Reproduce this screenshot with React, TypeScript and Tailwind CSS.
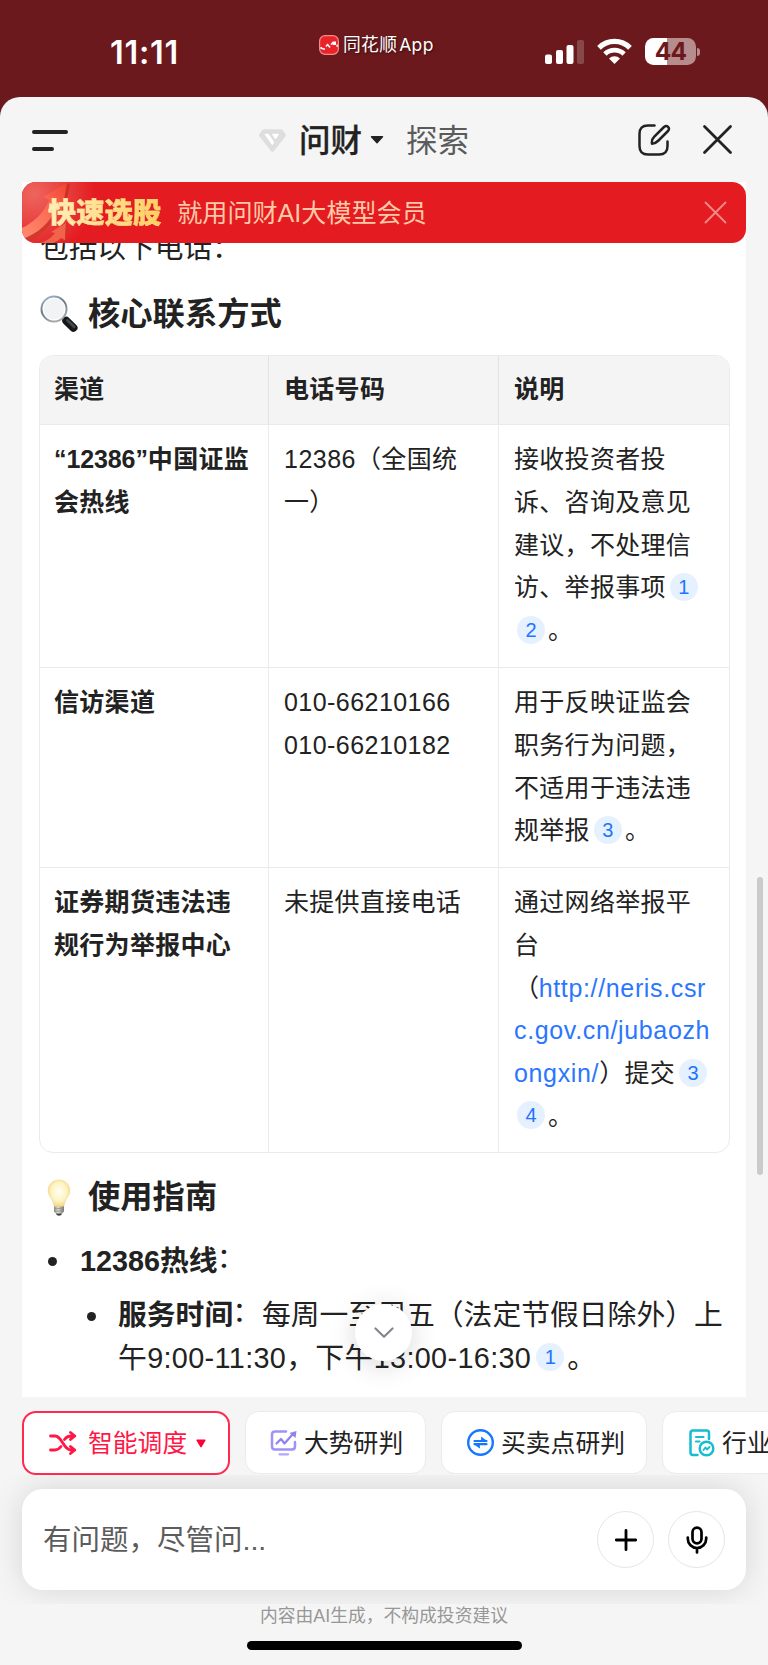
import React from "react";

function Cite({ n, className = "" }: { n: number; className?: string }) {
  return (
    <span
      className={`relative -top-[3px] mr-[3px] inline-flex h-[28px] w-[28px] items-center justify-center rounded-full bg-[#e6f1ff] align-middle text-[20px] leading-none tracking-normal text-[#1f73ff] ${className}`}
    >
      {n}
    </span>
  );
}

function Line({ children, className = "" }: { children: React.ReactNode; className?: string }) {
  return <div className={`h-[42.8px] whitespace-nowrap leading-[42.8px] ${className}`}>{children}</div>;
}

function Colon() {
  return <span className="relative -left-[1px] -top-[3px]">：</span>;
}

const cell = "pl-[14px] pt-[13px]";
const divided = "border-l border-[#ebebeb] pl-[15px] pt-[13px]";
const link = "text-[#2b76ff] tracking-[0.65px]";

function StatusBar() {
  return (
    <header className="flex h-[96.5px] shrink-0 items-start text-white">
      <div className="w-[319px] pl-[110px] pt-[33px] font-['Inter'] text-[32.5px] font-semibold leading-[40px] tracking-[0.7px]">
        11:11
      </div>
      <div className="flex w-[226px] items-center gap-[4px] pt-[33px]">
        <svg width="20" height="20" viewBox="0 0 20 20">
          <rect x="0.6" y="0.6" width="18.8" height="18.8" rx="5.5" fill="#ea2329" stroke="#f28b8e" strokeWidth="1.2" />
          <path d="M2 13.200l4 1M7 11.500l2-2.500M9 10l2 2.500M12 9.500l2-2" fill="none" stroke="#fff" strokeWidth="1.500" />
          <path d="M13.500 6.500h3.500v3.500h-3.500zM17.500 9.500h1.300v2.500h-1.300zM1.500 12h1.500v2h-1.500z" fill="#fff" />
        </svg>
        <span className="whitespace-nowrap text-[17.8px] leading-[24px] tracking-[0.3px] [text-shadow:1px_1px_2px_rgba(0,0,0,0.5)]">
          同花顺<span className="ml-[2px] font-['Inter'] text-[17.5px]">App</span>
        </span>
      </div>
      <svg className="mt-[39px]" width="39" height="26" viewBox="0 0 39 26" fill="#fff">
        <rect x="0" y="15.5" width="7" height="9.5" rx="2" />
        <rect x="11" y="11" width="7" height="14" rx="2" />
        <rect x="21.5" y="6" width="7" height="19" rx="2" />
        <rect x="32" y="1" width="7" height="24" rx="2" opacity=".2" />
      </svg>
      <svg className="ml-[13px] mt-[38px]" width="35" height="27" viewBox="0 0 35 27" fill="none" stroke="#fff">
        <path d="M2 9.8A22 22 0 0 1 33 9.8" strokeWidth="5.2" />
        <path d="M7.9 16A13.6 13.6 0 0 1 27.1 16" strokeWidth="4.7" />
        <path d="M12 20.4a8 8 0 0 1 11 0L17.5 26z" fill="#fff" stroke="none" />
      </svg>
      <div className="ml-[13px] mt-[38px] flex items-center gap-[1px]">
        <div className="flex h-[27px] w-[51px] items-center justify-center rounded-[8.5px] bg-[linear-gradient(90deg,#fff_22px,#b68c8d_22px)] font-['Inter'] text-[24.500px] font-bold leading-none tracking-[-0.8px] text-[#6b191c]">
          44
        </div>
        <div className="h-[8px] w-[3px] rounded-r-full bg-[#b68c8d]" />
      </div>
    </header>
  );
}

function NavBar() {
  return (
    <nav className="flex h-[85.5px] shrink-0 items-center pt-[1px]">
      <div className="flex w-[258px] flex-col gap-[12.5px] pl-[32px] pt-[1px]">
        <div className="h-[4px] w-[36px] rounded-full bg-[#222]" />
        <div className="h-[4px] w-[22px] rounded-full bg-[#222]" />
      </div>
      <svg className="mt-[1px]" width="29" height="25" viewBox="0 0 29 25">
        <path d="M6 1.2h17a2 2 0 0 1 1.6.8l3 4.2a2 2 0 0 1-.2 2.4L16 23a2 2 0 0 1-3 0L1.4 8.600a2 2 0 0 1-.2-2.400l3.200-4.200A2 2 0 0 1 6 1.200z" fill="#dedede" />
        <path d="M7 6.300h3.400l5.400 7.900-1.500 2.500z" fill="#fff" stroke="#fff" strokeWidth="1" strokeLinejoin="round" />
        <path d="M14.400 6.300h6.200l-3.100 4.600z" fill="#fff" stroke="#fff" strokeWidth="1" strokeLinejoin="round" />
      </svg>
      <span className="ml-[12px] pt-[2px] text-[31.5px] font-medium leading-[40px] text-[#222] [-webkit-text-stroke:0.3px_#222]">问财</span>
      <svg className="ml-[8px]" width="14" height="8" viewBox="0 0 14 8">
        <path d="M1.500.8h11L7 6.700z" fill="#222" stroke="#222" strokeWidth="1.400" strokeLinejoin="round" />
      </svg>
      <span className="ml-[22px] pt-[2px] text-[31.5px] leading-[40px] text-[#5b5b5b]">探索</span>
      <svg className="ml-[168px]" width="34" height="34" viewBox="0 0 34 34" fill="none" stroke="#222" strokeWidth="2.500" strokeLinecap="round">
        <path d="M17.500 2.500H11C5 2.500 2.500 5 2.500 11v12c0 6 2.500 8.500 8.500 8.500h11c6 0 8.500-2.500 8.500-8.500v-4.500" />
        <path d="M15 20.800c-.6-3.300 0-4.800 2.300-7.100L27 4c3-2.600 6.500.9 4 4l-9.500 9.500c-2.300 2.300-3.600 3.200-6.500 3.300z" strokeLinejoin="round" />
      </svg>
      <svg className="ml-[31px]" width="31" height="31" viewBox="0 0 31 31" fill="none" stroke="#222" strokeWidth="2.800" strokeLinecap="round">
        <path d="M2.500 2.500l26 26M28.500 2.500l-26 26" />
      </svg>
    </nav>
  );
}

function Banner() {
  return (
    <div className="absolute left-[22px] top-0 flex h-[61px] w-[724px] items-center overflow-hidden rounded-[14px] bg-[#e41b20]">
      <svg className="absolute left-0 top-0" width="90" height="61" viewBox="0 0 90 61">
        <defs>
          <radialGradient id="glow" gradientUnits="userSpaceOnUse" cx="12" cy="12" r="62">
            <stop offset="0" stopColor="#ee655e" />
            <stop offset=".5" stopColor="#e8403f" />
            <stop offset="1" stopColor="#e41b20" />
          </radialGradient>
          <linearGradient id="arrow" x1="0" y1="1" x2="1" y2="0">
            <stop offset="0" stopColor="#ff8c70" />
            <stop offset=".6" stopColor="#fb6850" />
            <stop offset="1" stopColor="#ef4434" />
          </linearGradient>
        </defs>
        <rect width="90" height="61" fill="url(#glow)" />
        <path d="M18 61c7-2 12-6 15-10l-4-1 15-9-1 17-4-2c-2 2-5 4-8 5z" fill="#f2634c" />
        <path d="M44 41l2 1-2 18-1-2z" fill="#cf3526" />
        <path d="M45 1l3 2-6 27-3-2z" fill="#cf3024" />
        <path d="M0 57C15 52 28 42 36 25l2 2C29 45 16 56 3 60z" fill="#cf3a2c" />
        <path d="M0 46C11 41 22 31 27 18l-6-3L45 1l-5 28-5-4C27 42 15 52 0 57z" fill="url(#arrow)" />
      </svg>
      <span className="relative ml-[26px] bg-[linear-gradient(90deg,#ffeebb,#ffd05e)] bg-clip-text pt-[1px] text-[28.300px] font-black leading-[40px] text-transparent [-webkit-text-stroke:0.4px_#ffdf8f]">
        快速选股
      </span>
      <span className="ml-[16px] pt-[1px] text-[25.100px] leading-[40px] text-[#ffc9a8]">就用问财AI大模型会员</span>
      <svg className="ml-auto mr-[19px]" width="23" height="23" viewBox="0 0 23 23" stroke="#f58a8c" strokeWidth="1.800" strokeLinecap="round">
        <path d="M1.500 1.500l20 20M21.500 1.500l-20 20" />
      </svg>
    </div>
  );
}

function Magnifier() {
  return (
    <svg width="38" height="38" viewBox="0 0 38 38">
      <defs>
        <linearGradient id="handle" x1="0" y1="1" x2="1" y2="0">
          <stop offset="0" stopColor="#0d0f10" />
          <stop offset=".55" stopColor="#4a5054" />
          <stop offset="1" stopColor="#090a0a" />
        </linearGradient>
        <linearGradient id="rim" x1="0" y1="0" x2="0.500" y2="1">
          <stop offset="0" stopColor="#a9c6e2" />
          <stop offset=".5" stopColor="#6b7883" />
          <stop offset="1" stopColor="#a3a7aa" />
        </linearGradient>
      </defs>
      <path d="M22.500 22.500l4 4" stroke="#999" strokeWidth="3.500" />
      <path d="M26.300 25.800l7.200 7" stroke="#15181a" strokeWidth="8" strokeLinecap="round" />
      <path d="M27.500 25.500l6.500 6.300" stroke="url(#handle)" strokeWidth="3" strokeLinecap="round" />
      <circle cx="14" cy="14" r="12.500" fill="#f2f3f4" stroke="url(#rim)" strokeWidth="2" />
      <circle cx="14" cy="14" r="10.800" fill="none" stroke="#fff" strokeWidth="1" />
    </svg>
  );
}

function Bulb() {
  return (
    <svg width="24" height="38" viewBox="0 0 24 38">
      <defs>
        <radialGradient id="bulb" cx=".5" cy=".45" r=".58">
          <stop offset="0" stopColor="#fffef4" />
          <stop offset=".6" stopColor="#fff4c4" />
          <stop offset="1" stopColor="#f2d47a" />
        </radialGradient>
        <linearGradient id="base">
          <stop offset="0" stopColor="#8c8982" />
          <stop offset=".4" stopColor="#e0deda" />
          <stop offset="1" stopColor="#77746f" />
        </linearGradient>
      </defs>
      <path d="M7 27h10v5c0 1.500-2 3-5 3s-5-1.500-5-3z" fill="url(#base)" />
      <path d="M7 30l10-1M7 32.500l10-1" stroke="#898680" strokeWidth=".7" />
      <path d="M9 34.500h6c-.5 3-5.500 3-6 0z" fill="#45423f" />
      <path d="M12 1C5.500 1 1.200 6 1.200 11.500c0 6 4.300 7.500 5.300 13 .3 1.800.5 2.800 1.500 2.800h8c1 0 1.200-1 1.500-2.800 1-5.500 5.300-7 5.300-13C22.800 6 18.500 1 12 1z" fill="url(#bulb)" stroke="#efd58c" strokeWidth=".6" />
    </svg>
  );
}

function ContactTable() {
  return (
    <div className="ml-[17px] w-[691px] overflow-hidden rounded-[14px] border border-[#ebebeb] text-[25px] tracking-[0.3px]">
      <div className="grid h-[68px] grid-cols-[228px_230px_1fr] bg-[#f4f4f4] font-bold">
        <div className="pl-[14px] pt-[12px]"><Line>渠道</Line></div>
        <div className="border-l border-[#e2e2e2] pl-[15px] pt-[12px]"><Line>电话号码</Line></div>
        <div className="border-l border-[#e2e2e2] pl-[15px] pt-[12px]"><Line>说明</Line></div>
      </div>
      <div className="grid h-[243px] grid-cols-[228px_230px_1fr] border-t border-[#ebebeb]">
        <div className={`${cell} font-bold`}>
          <Line><span className="tracking-[-0.100px]">“12386”</span>中国证监</Line>
          <Line>会热线</Line>
        </div>
        <div className={divided}>
          <Line><span className="tracking-[0.500px]">12386</span>（全国统</Line>
          <Line>一）</Line>
        </div>
        <div className={divided}>
          <Line>接收投资者投</Line>
          <Line>诉、咨询及意见</Line>
          <Line>建议，不处理信</Line>
          <Line>访、举报事项<Cite n={1} className="ml-[4px]" /></Line>
          <Line><Cite n={2} className="ml-[3px]" />。</Line>
        </div>
      </div>
      <div className="grid h-[200px] grid-cols-[228px_230px_1fr] border-t border-[#ebebeb]">
        <div className={`${cell} font-bold`}><Line>信访渠道</Line></div>
        <div className={`${divided} tracking-[0.450px]`}>
          <Line>010-66210166</Line>
          <Line>010-66210182</Line>
        </div>
        <div className={divided}>
          <Line>用于反映证监会</Line>
          <Line>职务行为问题，</Line>
          <Line>不适用于违法违</Line>
          <Line>规举报<Cite n={3} className="ml-[4px]" />。</Line>
        </div>
      </div>
      <div className="grid h-[285px] grid-cols-[228px_230px_1fr] border-t border-[#ebebeb]">
        <div className={`${cell} font-bold`}>
          <Line>证券期货违法违</Line>
          <Line>规行为举报中心</Line>
        </div>
        <div className={divided}><Line>未提供直接电话</Line></div>
        <div className={divided}>
          <Line>通过网络举报平</Line>
          <Line>台</Line>
          <Line><span className="tracking-[-0.300px]">（</span><span className={link}>http://neris.csr</span></Line>
          <Line className={link}>c.gov.cn/jubaozh</Line>
          <Line><span className={link}>ongxin/</span>）提交<Cite n={3} className="ml-[4px]" /></Line>
          <Line><Cite n={4} className="ml-[3px]" />。</Line>
        </div>
      </div>
    </div>
  );
}

function Conversation() {
  return (
    <main className="relative h-[1215px] shrink-0">
      <div className="mx-[22px] h-full overflow-hidden bg-white text-[#222]">
        <div className="mt-[45px] h-[43px] pl-[18px] text-[28.700px] leading-[43px]">包括以下电话：</div>
        <div className="mt-[22px] flex h-[43px] items-center pl-[18px]">
          <Magnifier />
          <h2 className="ml-[10px] pt-[1px] text-[32.300px] font-bold leading-[43px]">核心联系方式</h2>
        </div>
        <div className="h-[20px]" />
        <ContactTable />
        <div className="mt-[23px] flex h-[43px] items-center pl-[25px]">
          <Bulb />
          <h2 className="ml-[17px] text-[32.300px] font-bold leading-[43px]">使用指南</h2>
        </div>
        <div className="mt-[21px] flex items-center pl-[26px] text-[28.800px]">
          <span className="h-[9px] w-[9px] rounded-full bg-[#222]" />
          <Line className="ml-[23px]"><b>12386热线</b><Colon /></Line>
        </div>
        <div className="mt-[11px] flex pl-[65px] text-[28.800px]">
          <span className="mt-[18px] h-[9px] w-[9px] rounded-full bg-[#222]" />
          <div className="ml-[22px]">
            <Line><b>服务时间</b><Colon />每周一至周五（法定节假日除外）上</Line>
            <Line><span className="tracking-[0.350px]">午9:00-11:30，下午13:00-16:30</span><Cite n={1} className="ml-[5px]" />。</Line>
          </div>
        </div>
      </div>
      <Banner />
      <button className="absolute left-[355px] top-[1122px] flex h-[57px] w-[57px] items-center justify-center rounded-full bg-white shadow-[0_4px_28px_rgba(0,0,0,0.16)]">
        <svg width="20" height="12" viewBox="0 0 20 12" fill="none" stroke="#85878f" strokeWidth="2.200" strokeLinecap="round" strokeLinejoin="round">
          <path d="M1.500 1.500L10 9.800l8.500-8.300" />
        </svg>
      </button>
      <div className="absolute left-[757px] top-[695px] h-[298px] w-[5.500px] rounded-full bg-[#cacaca]" />
    </main>
  );
}

function Chips() {
  const chip = "flex h-[63px] shrink-0 items-center rounded-[14px] border-[1.500px] border-[#ebebeb] bg-white text-[24.800px] whitespace-nowrap text-[#222]";
  return (
    <div className="flex h-[78px] shrink-0 items-start gap-[15px] overflow-hidden pl-[22px] pt-[14px]">
      <button className="flex h-[64px] w-[208px] shrink-0 items-center rounded-[14px] border-2 border-[#ff2a50] bg-white pl-[25px] text-[24.800px] text-[#ff1846]">
        <svg width="28" height="24" viewBox="0 0 28 24" fill="none" stroke="#ff1846" strokeWidth="2.800" strokeLinecap="round" strokeLinejoin="round">
          <path d="M1.500 5H6c3 0 4.500 1.700 7.500 6.500S18.500 19 22 19h3.500M1.500 19H6c2.800 0 4.300-1.300 6-3.500M15.500 8.500C17.300 6 18.800 5 22 5h3.500M21.500 1.500L25.800 5l-4.300 3.500M21.500 15.500l4.300 3.500-4.300 3.500" />
        </svg>
        <span className="ml-[11px] pt-[2px]">智能调度</span>
        <svg className="ml-[9px]" width="10" height="9" viewBox="0 0 10 9">
          <path d="M1.200 1.200h7.600L5 7.500z" fill="#ff0034" stroke="#ff0034" strokeWidth="1.600" strokeLinejoin="round" />
        </svg>
      </button>
      <button className={`${chip} w-[181px] pl-[24px]`}>
        <svg width="27" height="27" viewBox="0 0 27 27" fill="none" stroke="#9d93f7" strokeWidth="2.500" strokeLinecap="round" strokeLinejoin="round">
          <path d="M16 2.500H5C3 2.500 2 3.500 2 5.500v12c0 2 1 3 3 3h17c2 0 3-1 3-3v-4.500" />
          <path d="M6.500 14.500L11 10l3.500 4.500L22 6" stroke="#8d82f2" strokeWidth="2.200" />
          <path d="M19.500 4L26.500 2l-1 7z" fill="#8d82f2" stroke="none" />
          <path d="M9.500 25.300h8.500" stroke="#b0a8ff" strokeWidth="2.300" />
        </svg>
        <span className="ml-[7px] pt-[2px]">大势研判</span>
      </button>
      <button className={`${chip} w-[206px] pl-[25px]`}>
        <svg width="27" height="27" viewBox="0 0 27 27" fill="none" stroke="#1677ff">
          <circle cx="13.500" cy="13.500" r="12.300" strokeWidth="2.400" />
          <path d="M7.500 12h12M19.500 15.200h-12" strokeWidth="2.200" strokeLinecap="round" />
          <path d="M14.500 8.200l5 3.800h-5zM12.500 19l-5-3.800h5z" fill="#1677ff" strokeWidth=".8" strokeLinejoin="round" />
        </svg>
        <span className="ml-[7px] pt-[2px]">买卖点研判</span>
      </button>
      <button className={`${chip} w-[181px] pl-[26px]`}>
        <svg width="26" height="28" viewBox="0 0 26 28" fill="none" stroke="#16bcd0" strokeWidth="2.500" strokeLinecap="round">
          <path d="M8.500 26H4c-1.500 0-2.500-1-2.500-2.500V4C1.500 2.500 2.500 1.500 4 1.500h13.500c1.500 0 2.500 1 2.500 2.500v6" />
          <path d="M7 8h7.500M7 12.500h3.500" strokeWidth="2.200" />
          <circle cx="17.500" cy="19.500" r="6.800" />
          <path d="M14.500 21l2-2.500 1.500 2 2.500-2.500" strokeWidth="1.900" strokeLinejoin="round" />
        </svg>
        <span className="ml-[7px] pt-[2px]">行业研判</span>
      </button>
    </div>
  );
}

function Composer() {
  const round = "flex h-[57px] w-[57px] items-center justify-center rounded-full border-[1.500px] border-[#e6e6e6]";
  return (
    <div className="h-[129px] shrink-0 overflow-hidden px-[22px] pt-[14px]">
      <div className="flex h-[101px] items-center rounded-[21px] bg-white pl-[21px] pr-[21px] shadow-[0_0_32px_rgba(0,0,0,0.13)]">
        <span className="pt-[1px] text-[28.500px] leading-[40px] text-[#5c5c5c]">有问题，尽管问...</span>
        <button className={`${round} ml-auto`}>
          <svg width="24" height="24" viewBox="0 0 24 24" stroke="#000" strokeWidth="2.800" strokeLinecap="round">
            <path d="M12 2.300v19.400M2.300 12h19.400" />
          </svg>
        </button>
        <button className={`${round} ml-[14px]`}>
          <svg width="22" height="28" viewBox="0 0 22 28" fill="none" stroke="#000" strokeWidth="2.700" strokeLinecap="round">
            <rect x="6.500" y="1.700" width="9" height="15.600" rx="4.500" />
            <path d="M1.800 11.500v1.300a9.200 9.200 0 0 0 18.400 0v-1.300M11 22.500v4" />
          </svg>
        </button>
      </div>
    </div>
  );
}

export default function App() {
  return (
    <div className="h-[1665px] w-[768px] overflow-hidden bg-[#6b191c] font-['Liberation_Sans','Noto_Sans_CJK_SC',sans-serif]">
      <div className="flex h-full flex-col">
        <StatusBar />
        <div className="flex flex-1 flex-col rounded-t-[20px] bg-[#f5f5f5]">
          <NavBar />
          <Conversation />
          <Chips />
          <Composer />
          <footer className="flex flex-1 flex-col items-center">
            <p className="text-[17.800px] leading-[24px] text-[#979797]">内容由AI生成，不构成投资建议</p>
            <div className="mt-[13px] h-[9px] w-[275px] rounded-full bg-black" />
          </footer>
        </div>
      </div>
    </div>
  );
}
